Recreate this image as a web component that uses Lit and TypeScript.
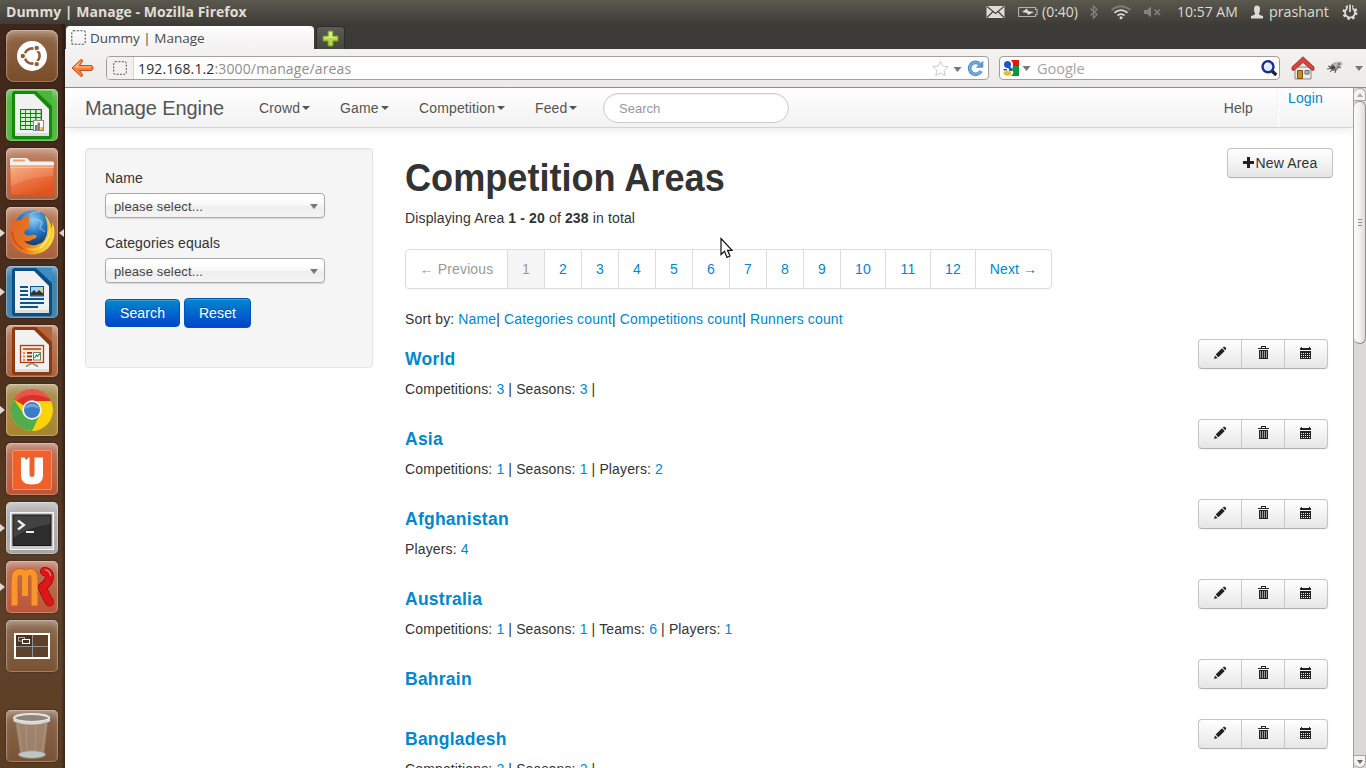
import { LitElement, html, css, svg, nothing } from "lit";
import { customElement } from "lit/decorators.js";

const tile = (cls: string, art: unknown, left = false, right = false) => html`
  <div class="slot">
    <i class="pip ${left ? "on" : ""}"></i>
    <div class="tile ${cls}"><svg viewBox="0 0 52 52" width="52" height="52">${art}</svg></div>
    <i class="pip r ${right ? "on" : ""}"></i>
  </div>`;

const page = (dark: string, mid: string) => svg`
  <rect x="6" y="2" width="40" height="48" rx="3" fill="${dark}"/>
  <path d="M30 2H46V17Z" fill="${mid}"/>
  <path d="M9 5H28L43 20V47H9Z" fill="#f1f1f1"/>
  <path d="M9 47H43V44H9Z" fill="#ddd"/>`;

const ubuntu = svg`
  <circle cx="26" cy="26" r="15" fill="#fff"/>
  <circle cx="26" cy="26" r="7.600" fill="none" stroke="#8b5f3c" stroke-width="2.600"/>
  <g fill="#8b5f3c" stroke="#fff" stroke-width="1.200">
    <circle cx="16.800" cy="26" r="2.800"/><circle cx="30.700" cy="17.900" r="2.800"/><circle cx="30.700" cy="34.100" r="2.800"/>
  </g>`;

const calc = svg`${page("#138a0c", "#4db53a")}
  <rect x="14" y="20" width="22" height="21" fill="#087f08"/>
  <g fill="#d3f3cf">
    ${[21, 25, 29, 33, 37].map((y) => [15, 20, 25, 30.5].map((x) => svg`<rect x="${x}" y="${y}" width="4.200" height="3"/>`))}
  </g>
  <rect x="27.500" y="31.500" width="10" height="10" fill="#fff" stroke="#888"/>
  <path d="M29 36h2.500v5H29z" fill="#1a93d8"/><path d="M31.500 33.500H34V41h-2.500z" fill="#d2622a"/><path d="M34.500 38H37v3h-2.500z" fill="#f0b61c"/>`;

const writer = svg`${page("#0d4f82", "#3e8cc0")}
  <g fill="#0b568b">
    <rect x="14" y="20" width="8" height="2"/><rect x="14" y="24" width="8" height="2"/><rect x="14" y="28" width="8" height="2"/>
    <rect x="14" y="32" width="24" height="2"/><rect x="14" y="36" width="24" height="2"/><rect x="14" y="40" width="18" height="2"/>
  </g>
  <rect x="24.500" y="20.500" width="13" height="9.500" fill="#a9d5f3" stroke="#0b568b"/>
  <circle cx="35" cy="23" r="1.500" fill="#ffd23e"/>
  <path d="M25 29.500V27l3-3 2.500 2.500L33 24l4.500 4v1.500z" fill="#333"/>`;

const impress = svg`${page("#8d3a10", "#b5633b")}
  <path d="M20 41.500L26 38l6 3.500" fill="none" stroke="#888" stroke-width="1.500"/>
  <rect x="14.500" y="20.500" width="23" height="17" fill="#fbe9dd" stroke="#a8430f" stroke-width="1.300"/>
  <rect x="17" y="23" width="18" height="2" fill="#d5622b"/>
  <g fill="#e48957"><rect x="17" y="27" width="2" height="2"/><rect x="17" y="30.500" width="2" height="2"/><rect x="17" y="34" width="2" height="2"/></g>
  <g fill="#93380c"><rect x="21" y="27" width="5" height="1.800"/><rect x="21" y="30.500" width="5" height="1.800"/><rect x="21" y="34" width="5" height="1.800"/></g>
  <rect x="27.500" y="27.500" width="7" height="7.500" fill="#fff" stroke="#777"/>
  <path d="M28.500 33l2-3 1 1.500 2.500-3" fill="none" stroke="#26a026" stroke-width="1.300"/>`;

const folder = svg`
  <defs><linearGradient id="fo" x1="0" y1="0" x2=".6" y2="1"><stop offset="0" stop-color="#f6a777"/><stop offset=".45" stop-color="#ee7a48"/><stop offset="1" stop-color="#e2531f"/></linearGradient></defs>
  <path d="M4 19V11.500Q4 10 5.500 10H20q1.500 0 2.500 1.500L24 13.500H46.500Q48 13.500 48 15V19Z" fill="#f5f2f0"/>
  <path d="M7 12.500H19" stroke="#eda06c" stroke-width="2"/>
  <path d="M3.500 18H48.500L47.500 45.500Q47.500 47 46 47H6Q4.700 47 4.600 45.500Z" fill="url(#fo)" stroke="#d15b2b" stroke-width=".8"/>
  <path d="M4.500 19.200H47.500" stroke="#ffd0a8" stroke-width="1.200"/>
  <path d="M5 20H47V28Q25 28 5 38Z" fill="#fff" opacity=".13"/>`;

const firefox = svg`
  <defs>
    <radialGradient id="gl" cx=".5" cy=".25" r=".75"><stop offset="0" stop-color="#8fd0f2"/><stop offset=".45" stop-color="#2b78c0"/><stop offset="1" stop-color="#0a2a66"/></radialGradient>
    <linearGradient id="fx" x1="0" y1="0" x2="1" y2=".3"><stop offset="0" stop-color="#e0602c"/><stop offset=".6" stop-color="#ea7a1c"/><stop offset="1" stop-color="#fbd536"/></linearGradient>
  </defs>
  <circle cx="27" cy="22.500" r="19" fill="url(#gl)"/>
  <path d="M24 8q4-4 10-3M30 12l6 3-2 6 5 4" fill="none" stroke="#a9dcf5" stroke-width="1.500" opacity=".5"/>
  <path d="M8 10Q3 18 3.500 27C4.500 39 14 47.500 26 47.500C39 47.500 48.500 38 48.500 25Q48.500 19 46 15Q46.500 19 45.500 21Q44 12 38.500 8Q42.500 16 41.500 24Q40.500 36 30 38Q22 39 18 33.500Q23 35.500 27 32Q31 31 30.500 28.500Q28 27 24 28.500Q20 29 18 26Q18.500 23 22.500 21Q23.500 18.500 22.500 16.500Q24 12 22 8.500Q18 9.500 15 13Q11.500 12.500 9.500 14Q8 12 8 10Z" fill="url(#fx)"/>
  <path d="M46 15Q46.500 19 45.500 21Q44 12 38.500 8Q42.500 16 41.500 24Q41 34 32 40Q26 43 19 41Q27 46 36 42Q47 36 46 15Z" fill="#fbc62d"/>
  <path d="M44 22Q43.500 34 34 41" fill="none" stroke="#fff0a0" stroke-width="1.200"/>
  <path d="M6 25Q7 37 17 42" fill="none" stroke="#c43d16" stroke-width="1.500" opacity=".7"/>`;

const chrome = svg`
  <circle cx="26" cy="26" r="21" fill="#fcd209"/>
  <path d="M26 26L7.800 15.500A21 21 0 0 1 44.200 15.500L45 17H26Z" fill="#d9322b"/>
  <path d="M7.800 15.500A21 21 0 0 0 26 47L34 30.500 18.200 30.500Z" fill="#4fae4b"/>
  <path d="M8 15A21 21 0 0 1 44 15Q36 11 26 11T10 18Z" fill="#f06a60" opacity=".6"/>
  <circle cx="26" cy="26" r="9.700" fill="#f4f4f4"/><circle cx="26" cy="26" r="8" fill="#3b7cc5"/>
  <path d="M18.500 25A8 8 0 0 1 33.500 25Q26 21 18.500 25Z" fill="#70a6de"/>`;

const one = svg`
  <rect x="6.500" y="7.500" width="39" height="39" rx="1.500" fill="#f0602d" stroke="#f8936b"/>
  <path d="M15 14.500H18.500L20 17 23.500 14V31Q23.500 34 26 34T28.500 31V14.500H37V32Q37 41.500 26 41.500T15 32Z" fill="#fff"/>`;

const term = svg`
  <rect x="4.500" y="10.500" width="43" height="37" fill="#c9c9c9" stroke="#f7f7f7"/>
  <rect x="7" y="13" width="38" height="30.500" fill="#2d2d2d" stroke="#151515"/>
  <path d="M7.500 13.500H44.500V22Q25 24 7.500 36Z" fill="#fff" opacity=".1"/>
  <path d="M12 18.500L18 23 12 27.500" fill="none" stroke="#eee" stroke-width="2.200"/><path d="M20 30H28" stroke="#eee" stroke-width="2"/>`;

const mr = svg`
  <path d="M8.500 45V19Q8.500 11 14 11T19 18V35V18Q19 11 24 11T28.500 19V45" fill="none" stroke="#c95f12" stroke-width="7.500"/>
  <path d="M8.500 44.500V19Q8.500 11 14 11T19 18V35V18Q19 11 24 11T28.500 19V44.500" fill="none" stroke="#fa952b" stroke-width="6"/>
  <path d="M38.500 10.500Q44.500 11.500 43 18Q42 22 36.500 26Q38 32 43.500 41" fill="none" stroke="#8c0b0b" stroke-width="9" stroke-linecap="round" stroke-linejoin="round"/>
  <path d="M38.500 10.500Q44.500 11.500 43 18Q42 22 36.500 26Q38 32 43.500 41" fill="none" stroke="#dd1717" stroke-width="7.600" stroke-linecap="round" stroke-linejoin="round"/>
  <path d="M39 8.500Q44.500 10 44.500 15" fill="none" stroke="#f98585" stroke-width="1.200"/>`;

const spaces = svg`
  <rect x="9" y="14" width="34" height="24" fill="#5d412b" stroke="#fff" stroke-width="2"/>
  <path d="M10 15H26V26H10Z" fill="#4a3220"/>
  <path d="M26.500 15V37M10 26.500H42" stroke="#8f9599" stroke-width="1"/>
  <rect x="12.500" y="17.500" width="6" height="3.500" fill="none" stroke="#aaa"/><rect x="16.500" y="19.500" width="7" height="4" fill="#4a3220" stroke="#fff"/>`;

const bin = svg`
  <path d="M9 10L14.500 46Q25 50 38 46L42 10Z" fill="#b8a190" opacity=".55"/>
  <path d="M12 12L16 43M20 13l1 30M30 13l-1 30M40 12l-4 31" stroke="#d9c9bb" opacity=".25"/>
  <ellipse cx="26" cy="44.500" rx="13.500" ry="3.800" fill="#bfc5c2" stroke="#8b8f8c" stroke-width=".8"/>
  <ellipse cx="25.700" cy="8" rx="17.500" ry="4" fill="#8d857c" stroke="#e3e5e3" stroke-width="2.200"/>
  <path d="M7.500 9V11.500Q25 18 44 11.500V9Q25 15.500 7.500 9Z" fill="#d5d8d5"/>`;

const areas: { name: string; stats: [string, number][]; bar?: boolean }[] = [
  { name: "World", stats: [["Competitions", 3], ["Seasons", 3]], bar: true },
  { name: "Asia", stats: [["Competitions", 1], ["Seasons", 1], ["Players", 2]] },
  { name: "Afghanistan", stats: [["Players", 4]] },
  { name: "Australia", stats: [["Competitions", 1], ["Seasons", 1], ["Teams", 6], ["Players", 1]] },
  { name: "Bahrain", stats: [] },
  { name: "Bangladesh", stats: [["Competitions", 2], ["Seasons", 2]], bar: true },
];

const pencil = svg`<path d="M1 13l1-3.600 2.600 2.600zM2.700 8.600L9 2.300l2.700 2.700-6.300 6.300zM9.700 1.600L11 .8Q12 .6 12.700 1.400T13 3.200L12.300 4.300z" fill="#222"/>`;
const trash = svg`<path d="M5 2V0h5v2h3v1H2V2zM6 1v1h3V1zM3 4h9v9H3z" fill="#222" fill-rule="evenodd"/><path d="M4.500 5v7M6.500 5v7M8.500 5v7M10.500 5v7" stroke="#999"/>`;
const calendar = svg`<path d="M1 2h1V1h1v1h7V1h1v1h1v2H1zM1 5h11v8H1z" fill="#222"/><path d="M2 7.500h10M2 9.500h10M2 11.500h10" stroke="#eee" stroke-width="1" stroke-dasharray="1 1"/>`;

@customElement("app-root")
export class AppRoot extends LitElement {
  static styles = css`
    :host { display: grid; grid-template-rows: 24px 744px; width: 1366px; height: 768px; overflow: hidden; position: relative; font: 14px/20px "Liberation Sans", Arial, sans-serif; letter-spacing: .135px; color: #333; background: #fff; }
    * { box-sizing: border-box; }
    svg { display: block; flex: none; }
    .ui { font-family: "Open Sans", "Noto Sans", sans-serif; letter-spacing: 0; }
    .panel { display: flex; align-items: center; background: linear-gradient(#5b594e, #3d3c37); color: #dfdbd2; font-size: 14px; padding: 0 8px 0 6px; }
    .title { font-weight: 700; font-size: 14px; letter-spacing: .03px; flex: 1; color: #e2ded5; white-space: nowrap; }
    .tray { display: flex; align-items: center; }
    .desk { display: grid; grid-template-columns: 65px 1301px; }
    .dock { display: flex; flex-direction: column; gap: 7px; padding-top: 6px; background: linear-gradient(90deg, transparent 61px, #0006), linear-gradient(#40261a, #50341f 55%, #60422a 85%, #5a3c22); }
    .slot { display: flex; align-items: center; height: 52px; }
    .slot:last-child { margin-top: 31px; }
    .pip { width: 6px; height: 0; }
    .pip.on { border-left: 5px solid #ddd8d2; border-top: 4px solid transparent; border-bottom: 4px solid transparent; height: 8px; }
    .pip.r.on { border-left: 0; border-right: 5px solid #ddd8d2; }
    .tile { width: 52px; height: 52px; border-radius: 5px; overflow: hidden; box-shadow: inset 0 0 0 1px #ffffff45, inset 0 7px 8px -4px #ffffff70, 0 0 2px #0008; }
    .t-brown { background: linear-gradient(#93694a, #7a4c29); border-radius: 8px; }
    .t-green { background: #56b53f; }
    .t-rust { background: linear-gradient(#bb8163, #a8613c); }
    .t-blue { background: #3f83ae; }
    .t-gold { background: linear-gradient(#a8935a, #a8842f); }
    .t-red { background: linear-gradient(#b97660, #bd5535); }
    .t-grey { background: linear-gradient(#b5b5b5, #a5a5a5); }
    .t-dim { background: linear-gradient(#8a6a50, #7a5232); }
    .browser { display: grid; grid-template-rows: 25px 39px 680px; min-width: 0; }
    .tabs { display: flex; background: #3c3b37; gap: 2px; padding: 2px 0 0 1px; }
    .tab { width: 248px; height: 23px; background: linear-gradient(#fcfcfc, #f3f2f1); border-radius: 4px 4px 0 0; display: flex; align-items: center; gap: 4px; padding-left: 5px; color: #4a4a48; font-size: 13.500px; }
    .plus { width: 29px; border-radius: 4px 4px 0 0; background: linear-gradient(#5d5b55, #474641); border: 1px solid #2e2d2a; border-bottom: 0; display: flex; align-items: center; justify-content: center; }
    .tools { display: flex; align-items: center; background: linear-gradient(#f3f2f1, #edebe9); border-bottom: 1px solid #908c88; padding: 0 4px 0 6px; font-size: 14px; }
    .field { height: 24px; display: flex; align-items: center; background: #fff; border: 1px solid #a29e99; border-radius: 4px; }
    .url { width: 883px; margin-left: 12px; padding-right: 4px; }
    .ident { width: 27px; height: 22px; border-right: 1px solid #d6d3d0; background: #f2f1f0; border-radius: 3px 0 0 3px; display: flex; align-items: center; justify-content: center; }
    .addr { flex: 1; padding: 1px 0 0 4px; color: #8f8d8a; letter-spacing: .13px; }
    .addr b { font-weight: 400; color: #2d2d2d; }
    .find { width: 281px; margin: 0 11px 0 10px; padding: 0 1px 0 3px; color: #a5a29f; }
    .find span { flex: 1; padding: 1px 0 0 5px; font-size: 14.500px; }
    .dd { border-top: 5px solid #777; border-left: 4px solid transparent; border-right: 4px solid transparent; }
    .view { display: grid; grid-template-columns: 1288px 13px; height: 680px; }
    .site { overflow: hidden; height: 680px; }
    .nav { height: 40px; display: flex; background: linear-gradient(#fff, #f2f2f2); border-bottom: 1px solid #d4d4d4; box-shadow: 0 1px 10px rgba(0,0,0,.1); color: #555; padding-left: 20px; line-height: 40px; }
    .brand { font-size: 20px; width: 174px; letter-spacing: -.08px; }
    .nav a { display: flex; align-items: center; }
    .car { border-top: 4px solid #555; border-left: 4px solid transparent; border-right: 4px solid transparent; margin-left: 2px; }
    .m1 { width: 81px; } .m2 { width: 79px; } .m3 { width: 116px; } .m4 { width: 68px; }
    .q { width: 186px; height: 30px; margin-top: 5px; border: 1px solid #ccc; border-radius: 15px; background: #fff; box-shadow: inset 0 1px 1px rgba(0,0,0,.075); font-size: 13px; letter-spacing: 0; line-height: 29px; padding-left: 15px; color: #999; }
    .help { margin-left: auto; padding-right: 25px; }
    .login { width: 75px; border-left: 1px solid #fff; box-shadow: -1px 0 #f2f2f2; line-height: 20px; padding-left: 9px; }
    .body { display: flex; padding: 20px 20px 0; gap: 32px; }
    .well { width: 288px; height: 220px; background: #f5f5f5; border: 1px solid #e3e3e3; border-radius: 4px; box-shadow: inset 0 1px 1px rgba(0,0,0,.05); padding: 19px; }
    .lab { height: 20px; margin-bottom: 5px; }
    .sel { width: 220px; height: 25px; margin-bottom: 15px; border: 1px solid #aaa; border-radius: 4px; background: linear-gradient(#fff 20%, #f6f6f6 50%, #eee 52%, #f4f4f4); box-shadow: 0 1px 1px rgba(0,0,0,.12); font-size: 13px; color: #444; display: flex; align-items: center; justify-content: space-between; padding: 2px 6px 0 8px; }
    .sel i { border-top: 5px solid #777; border-left: 4px solid transparent; border-right: 4px solid transparent; margin-bottom: 1px; }
    .acts { display: flex; gap: 4px; align-items: center; }
    .go { height: 28px; width: 75px; text-align: center; line-height: 26px; color: #fff; border: 1px solid #0055b8; border-radius: 4px; background: linear-gradient(#08c, #04c); box-shadow: inset 0 1px 0 rgba(255,255,255,.2); text-shadow: 0 -1px 0 rgba(0,0,0,.25); }
    .go.rs { height: 30px; width: 67px; line-height: 28px; }
    .main { width: 928px; }
    .head { display: flex; justify-content: space-between; height: 60px; }
    h1 { font-size: 38.500px; line-height: 40px; margin: 10px 0 0; letter-spacing: 0; transform: scaleX(.938); transform-origin: 0 0; white-space: nowrap; }
    .btn { height: 30px; border: 1px solid #c5c5c5; border-bottom-color: #b0b0b0; border-radius: 4px; background: linear-gradient(#fff, #e6e6e6); box-shadow: inset 0 1px 0 rgba(255,255,255,.2), 0 1px 2px rgba(0,0,0,.05); display: flex; align-items: center; justify-content: center; }
    .new { width: 106px; }
    .pages { display: flex; width: 647px; margin: 21px 0 20px; border: 1px solid #ddd; border-radius: 4px; height: 40px; box-shadow: 0 1px 2px rgba(0,0,0,.05); line-height: 38px; color: #08c; }
    .pages span { width: 37px; text-align: center; border-left: 1px solid #ddd; }
    .pages .wide { width: 45px; }
    .pages span:first-child { border: 0; color: #999; width: 101px; white-space: nowrap; }
    .pages .cur { background: #f5f5f5; color: #999; }
    .pages span:last-child { flex: 1; white-space: nowrap; }
    a { color: #08c; }
    .nav a { color: #555; }
    .nav .login { color: #08c; display: block; }
    .sort { margin-bottom: 10px; }
    .row { display: flex; justify-content: space-between; padding-right: 5px; }
    h4 { font-size: 17.500px; letter-spacing: .25px; line-height: 20px; margin: 10px 0; color: #08c; }
    .info { padding-bottom: 20px; }
    .grp { width: 130px; }
    .grp span { flex: 1; height: 28px; display: flex; align-items: center; justify-content: center; padding-bottom: 2px; }
    .grp span + span { border-left: 1px solid #c8c8c8; }
    .scroll { background: #dcd8d5; border-left: 1px solid #a39f9b; display: flex; flex-direction: column; }
    .sb { height: 13px; background: #f4f3f2; border: 1px solid #aaa6a2; border-radius: 6px 6px 0 0; border-left: 0; display: flex; align-items: center; justify-content: center; }
    .sb.dn { border-radius: 0 0 6px 6px; margin-top: auto; }
    .thumb { height: 243px; border: 1px solid #918d89; border-left: 0; border-radius: 6px; background: linear-gradient(90deg, #fcfcfc, #f2f1f0 50%, #dedbd8); display: flex; flex-direction: column; gap: 2px; align-items: center; justify-content: center; }
    .thumb i { width: 4px; height: 1px; background: #918d89; }
    .up { border-bottom: 4px solid #aaa; border-left: 3px solid transparent; border-right: 3px solid transparent; }
    .down { border-top: 4px solid #666; border-left: 3px solid transparent; border-right: 3px solid transparent; }
    .cursor { position: absolute; left: 719px; top: 237px; }
    .g1 { margin-right: 13px; } .g2 { margin-right: 4px; }
    .c1 { width: 47px; white-space: nowrap; } .c2 { width: 74px; white-space: nowrap; } .c3 { width: 73px; white-space: nowrap; font-size: 14.300px; }
  `;

  private blank(size: number) {
    return html`<svg width="${size}" height="${size}" viewBox="0 0 14 14"><rect x=".7" y=".7" width="12.600" height="12.600" rx="1.500" fill="none" stroke="#555" stroke-dasharray="2 1.300"/></svg>`;
  }

  private row(a: (typeof areas)[number]) {
    return html`<div class="row">
      <div class="info">
        <h4>${a.name}</h4>
        ${a.stats.length
          ? html`<div>${a.stats.map(([k, v], i) => html`${i ? " | " : ""}${k}: <a>${v}</a>`)}${a.bar ? " |" : nothing}</div>`
          : nothing}
      </div>
      <div class="btn grp">${[pencil, trash, calendar].map((g) => html`<span><svg width="14" height="14" viewBox="0 0 14 14">${g}</svg></span>`)}</div>
    </div>`;
  }

  render() {
    return html`
      <div class="panel ui">
        <span class="title">Dummy | Manage - Mozilla Firefox</span>
        <div class="tray">
          <svg class="g1" width="19" height="14" viewBox="0 0 19 14"><rect x=".5" y="1" width="18" height="12" fill="#dfdbd2"/><path d="M1 1.500l8.500 7 8.500-7M1 12.500l6-6M18 12.500l-6-6" fill="none" stroke="#45443e" stroke-width="1.200"/></svg>
          <svg class="g2" width="20" height="14" viewBox="0 0 20 14"><path d="M1.500 2.500h16v2h1.500v5h-1.500v2h-16q-1 0-1-1v-7q0-1 1-1z" fill="none" stroke="#b5b2a9" stroke-width="1.200"/><path d="M4 7l5-3.500 1 2.500 6 1-6 3-1-2z" fill="#dfdbd2"/></svg>
          <span class="c1">(0:40)</span>
          <svg width="10" height="16" viewBox="0 0 10 16"><path d="M1.500 4.500l6.500 6-3.500 3.500V2L8 5.500l-6.500 6" fill="none" stroke="#84827a" stroke-width="1.300"/></svg>
          <svg width="44" height="16" viewBox="0 0 44 16"><g fill="none" stroke-width="1.800"><path d="M12.500 6Q22-1.500 31.500 6" stroke="#7d7b73"/><path d="M15.500 8.800Q22 3.500 28.500 8.800" stroke="#dfdbd2"/><path d="M18.500 11.500Q22 8.800 25.500 11.500" stroke="#dfdbd2"/></g><circle cx="22" cy="13.700" r="1.500" fill="#dfdbd2"/></svg>
          <svg width="34" height="14" viewBox="0 0 34 14"><path d="M1 5h3l4-3.500v11L4 9H1z" fill="#84827a"/><path d="M11.500 4.500l5.500 5.500M17 4.500l-5.500 5.500" stroke="#84827a" stroke-width="1.500"/></svg>
          <span class="c2">10:57 AM</span>
          <svg width="18" height="14" viewBox="0 0 18 14"><path d="M6 .500Q9 .500 9 4T7.800 8.500Q8 10 12 11v2.500H0V11Q4 10 4.200 8.500Q3 7.500 3 4T6 .500z" fill="#dfdbd2"/></svg>
          <span class="c3">prashant</span>
          <svg width="16" height="16" viewBox="0 0 16 16"><circle cx="8" cy="8.500" r="6.300" fill="none" stroke="#dfdbd2" stroke-width="2.400" stroke-dasharray="2.500 2.450"/><path d="M5.500 4.300A5 5 0 1 0 10.500 4.300" fill="none" stroke="#dfdbd2" stroke-width="1.800"/><path d="M8 0v8" stroke="#45443e" stroke-width="4"/><path d="M8 .500v7.500" stroke="#dfdbd2" stroke-width="1.800"/></svg>
        </div>
      </div>
      <div class="desk">
        <div class="dock">
          ${tile("t-brown", ubuntu)} ${tile("t-green", calc)} ${tile("t-rust", folder)} ${tile("t-rust", firefox, true, true)}
          ${tile("t-blue", writer, true)} ${tile("t-rust", impress)} ${tile("t-gold", chrome, true)} ${tile("t-red", one)}
          ${tile("t-grey", term, true)} ${tile("t-red", mr, true)} ${tile("t-dim", spaces)} ${tile("t-dim", bin)}
        </div>
        <div class="browser">
          <div class="tabs ui">
            <div class="tab">${this.blank(15)}<span>Dummy | Manage</span></div>
            <div class="plus"><svg width="17" height="17" viewBox="0 0 17 17"><path d="M6 1h5v5h5v5h-5v5H6v-5H1V6h5z" fill="#b5d84a" stroke="#6f9a1c"/><path d="M7 2h3v5h5v1H2V7h5z" fill="#d8ec8d"/></svg></div>
          </div>
          <div class="tools ui">
            <svg width="23" height="20" viewBox="0 0 23 20"><path d="M10 1.500L1 10l9 8.500q2 0 1.500-2L8.500 12.500H20q2 0 2-2.500T20 7.500H8.500l3-4Q12 1.500 10 1.500z" fill="#f0813a" stroke="#c4511b"/><path d="M10 3L3 9.500h17V8.500H6.500z" fill="#ffc393"/></svg>
            <div class="field url">
              <div class="ident">${this.blank(14)}</div>
              <span class="addr"><b>192.168.1.2</b>:3000/manage/areas</span>
              <svg width="17" height="17" viewBox="0 0 17 17"><path d="M8.500 1l2.200 5.200 5.500.500-4.200 3.700 1.300 5.400-4.800-2.900-4.800 2.900L5 10.400.800 6.700l5.500-.500z" fill="#fff" stroke="#ccc"/></svg>
              <svg width="18" height="17" viewBox="0 0 18 17"><path d="M4.500 7h8l-4 5z" fill="#777"/></svg>
              <svg width="17" height="17" viewBox="0 0 17 17"><path d="M12.500 3.800A6 6 0 1 0 14 11" fill="none" stroke="#4b86c4" stroke-width="3.600"/><path d="M12.500 3.800A6 6 0 1 0 14 11" fill="none" stroke="#79aee0" stroke-width="1.800"/><path d="M8.500 7.800H16.300V.500z" fill="#5d97d2"/></svg>
            </div>
            <div class="field find">
              <svg width="16" height="16" viewBox="0 0 16 16"><path d="M8 0h8v6H10Q10 2 8 0z" fill="#e8140c"/><path d="M10 6h6v10H8q4-3 1-6z" fill="#129245"/><circle cx="4.500" cy="4.500" r="3.500" fill="#2057c8"/><path d="M6 6.500q4 1 3 4.500H6q1-2-1-3z" fill="#2057c8"/><ellipse cx="4.500" cy="13.300" rx="3.800" ry="2.400" fill="#f5b81e"/><path d="M0 9h4v1.500H1z" fill="#2057c8"/></svg>
              <svg width="13" height="16" viewBox="0 0 13 16"><path d="M3.500 6h8l-4 5z" fill="#777"/></svg>
              <span>Google</span>
              <svg width="18" height="18" viewBox="0 0 18 18"><path d="M12 12l4.300 4" stroke="#222" stroke-width="3.200"/><circle cx="8" cy="7.800" r="5.500" fill="#dfe9fa" stroke="#1c2f86" stroke-width="2.400"/><path d="M5 7q.500-2.500 3-3" fill="none" stroke="#fff" stroke-width="1.500"/></svg>
            </div>
            <svg width="24" height="24" viewBox="0 0 24 24"><path d="M4 11h16v12H4z" fill="#eeece8" stroke="#888"/><path d="M1 14V11L12 .8l11 10.200V14q-1.500 1-3-.500L12 6.500 4 13.500q-1.500 1.500-3 .500z" fill="#d64541" stroke="#9c2521" stroke-width=".8"/><path d="M6.500 14.500h5v8h-5z" fill="#c88c23" stroke="#7c5210"/><path d="M14 14.500h4v3.500h-4z" fill="#9cc3e8" stroke="#666"/></svg>
            <svg width="40" height="20" viewBox="0 0 40 20"><path d="M14 9Q19 3 27 4L26 8 21 13 17 13z" fill="#8d8d8d"/><ellipse cx="23" cy="6.500" rx="4.500" ry="2.500" fill="#bbb" transform="rotate(-15 23 6)"/><path d="M13 8l4 2M15 14l3-3M20 15l1-4M12 11l4-.500M22 8l4 2" stroke="#555" stroke-width="1" fill="none"/><circle cx="18" cy="9.500" r="2" fill="#444"/><circle cx="24" cy="6" r="1" fill="#444"/></svg>
            <i class="dd"></i>
          </div>
          <div class="view">
            <div class="site">
              <div class="nav">
                <span class="brand">Manage Engine</span>
                <a class="m1">Crowd<i class="car"></i></a><a class="m2">Game<i class="car"></i></a><a class="m3">Competition<i class="car"></i></a><a class="m4">Feed<i class="car"></i></a>
                <div class="q">Search</div>
                <a class="help">Help</a><a class="login">Login</a>
              </div>
              <div class="body">
                <div class="well">
                  <div class="lab">Name</div><div class="sel">please select...<i></i></div>
                  <div class="lab">Categories equals</div><div class="sel">please select...<i></i></div>
                  <div class="acts"><div class="go">Search</div><div class="go rs">Reset</div></div>
                </div>
                <div class="main">
                  <div class="head"><h1>Competition Areas</h1>
                    <div class="btn new"><svg width="13" height="14" viewBox="0 0 13 14"><path d="M4 1h3v4h4v3H7v4H4v-4H0v-3h4z" fill="#222"/></svg>New Area</div></div>
                  <div>Displaying Area <b>1 - 20</b> of <b>238</b> in total</div>
                  <div class="pages"><span>← Previous</span><span class="cur">1</span>${[2, 3, 4, 5, 6, 7, 8, 9, 10, 11, 12].map((n) => html`<span class=${n > 9 ? "wide" : ""}>${n}</span>`)}<span>Next →</span></div>
                  <div class="sort">Sort by: <a>Name</a>| <a>Categories count</a>| <a>Competitions count</a>| <a>Runners count</a></div>
                  ${areas.map((a) => this.row(a))}
                </div>
              </div>
            </div>
            <div class="scroll"><div class="sb"><i class="up"></i></div><div class="thumb"><i></i><i></i><i></i></div><div class="sb dn"><i class="down"></i></div></div>
          </div>
        </div>
      </div>
      <svg class="cursor" width="14" height="22" viewBox="0 0 14 22"><path d="M2 1.500V17.500L5.500 14.200 8 20.500 11 19 8.500 13.300H13Z" fill="#fff" stroke="#111" stroke-width="1.200"/></svg>
    `;
  }
}
